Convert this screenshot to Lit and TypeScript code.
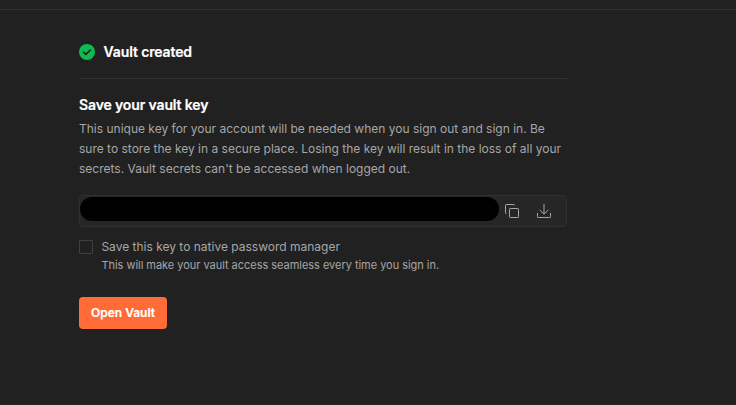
import { LitElement, html, css } from "lit";
import { customElement } from "lit/decorators.js";

@customElement("app-root")
export class AppRoot extends LitElement {
  static styles = css`
    :host { display: block; height: 405px; background: #212121; color: #a6a6a6; font-family: Inter, sans-serif; overflow: hidden; }
    * { box-sizing: border-box; }
    .page { height: 405px; display: flex; flex-direction: column; border-bottom: 2px solid #262324; }
    .topbar { height: 10px; flex: none; border-bottom: 1px solid #333; }
    .content { width: 488px; margin-left: 79px; }
    .status { height: 69px; display: flex; align-items: center; gap: 8.6px; padding-top: 15px; border-bottom: 1px solid #333; }
    .status svg { display: block; }
    h1, h2, p { margin: 0; }
    h1, h2 { color: #fff; font-size: 14px; line-height: 20px; font-weight: 600; letter-spacing: -0.13px; white-space: nowrap; -webkit-text-stroke: 0.2px #fff; }
    h2 { margin-top: 16px; }
    .desc { font-size: 12px; line-height: 20px; margin-top: 4px; white-space: nowrap; }
    .key { height: 32px; margin-top: 16px; border: 1px solid #303030; border-radius: 4px; background: #262626; display: flex; align-items: flex-start; }
    .mask { width: 419px; height: 24px; margin-top: 1px; border-radius: 12px; background: #000; }
    .actions { display: flex; gap: 16px; margin: 7px 0 0 5px; }
    .actions svg { display: block; }
    .option { display: flex; gap: 8.4px; margin-top: 10px; }
    .box { width: 14px; height: 14px; margin-top: 3px; border: 1px solid #404040; border-radius: 1px; }
    .label { font-size: 12px; line-height: 20px; }
    .hint { font-size: 11px; line-height: 16px; letter-spacing: -0.03px; }
    button { display: block; width: 88px; height: 32px; margin-top: 24px; padding: 0; border: 0; border-radius: 4px; background: #ff6c37; color: #fff; font: 600 12px/32px Inter, sans-serif; -webkit-text-stroke: 0.2px #fff; }
  `;

  render() {
    return html`
      <div class="page">
        <div class="topbar"></div>
        <main class="content">
          <div class="status">
            <svg width="16" height="16" viewBox="0 0 16 16"><circle cx="8" cy="8" r="8" fill="#0cbb52"/><path d="M4.2 7.800 6.900 10.400 11.900 5.500" fill="none" stroke="#212121" stroke-width="1.700"/></svg>
            <h1>Vault created</h1>
          </div>
          <h2>Save your vault key</h2>
          <p class="desc">This unique key for your account will be needed when you sign out and sign in. Be<br>sure to store the key in a secure place. Losing the key will result in the loss of all your<br>secrets. Vault secrets can't be accessed when logged out.</p>
          <div class="key">
            <div class="mask"></div>
            <div class="actions">
              <svg width="16" height="16" viewBox="0 0 16 16" fill="none" stroke="#a6a6a6"><rect x="5.5" y="5.5" width="9" height="9" rx=".7"/><path d="M2.500 10.500H2.200a.7.7 0 0 1-.7-.7V2.200a.7.7 0 0 1 .7-.7h7.600a.7.7 0 0 1 .7.7V2.500"/></svg>
              <svg width="16" height="16" viewBox="0 0 16 16" fill="none" stroke="#a6a6a6"><path d="M8 1v10M3.700 7 8 11.200 12.300 7M1.500 10v3.800a.7.7 0 0 0 .7.7h11.600a.7.7 0 0 0 .7-.7V10"/></svg>
            </div>
          </div>
          <div class="option">
            <div class="box"></div>
            <div>
              <p class="label">Save this key to native password manager</p>
              <p class="hint">This will make your vault access seamless every time you sign in.</p>
            </div>
          </div>
          <button>Open Vault</button>
        </main>
      </div>
    `;
  }
}
